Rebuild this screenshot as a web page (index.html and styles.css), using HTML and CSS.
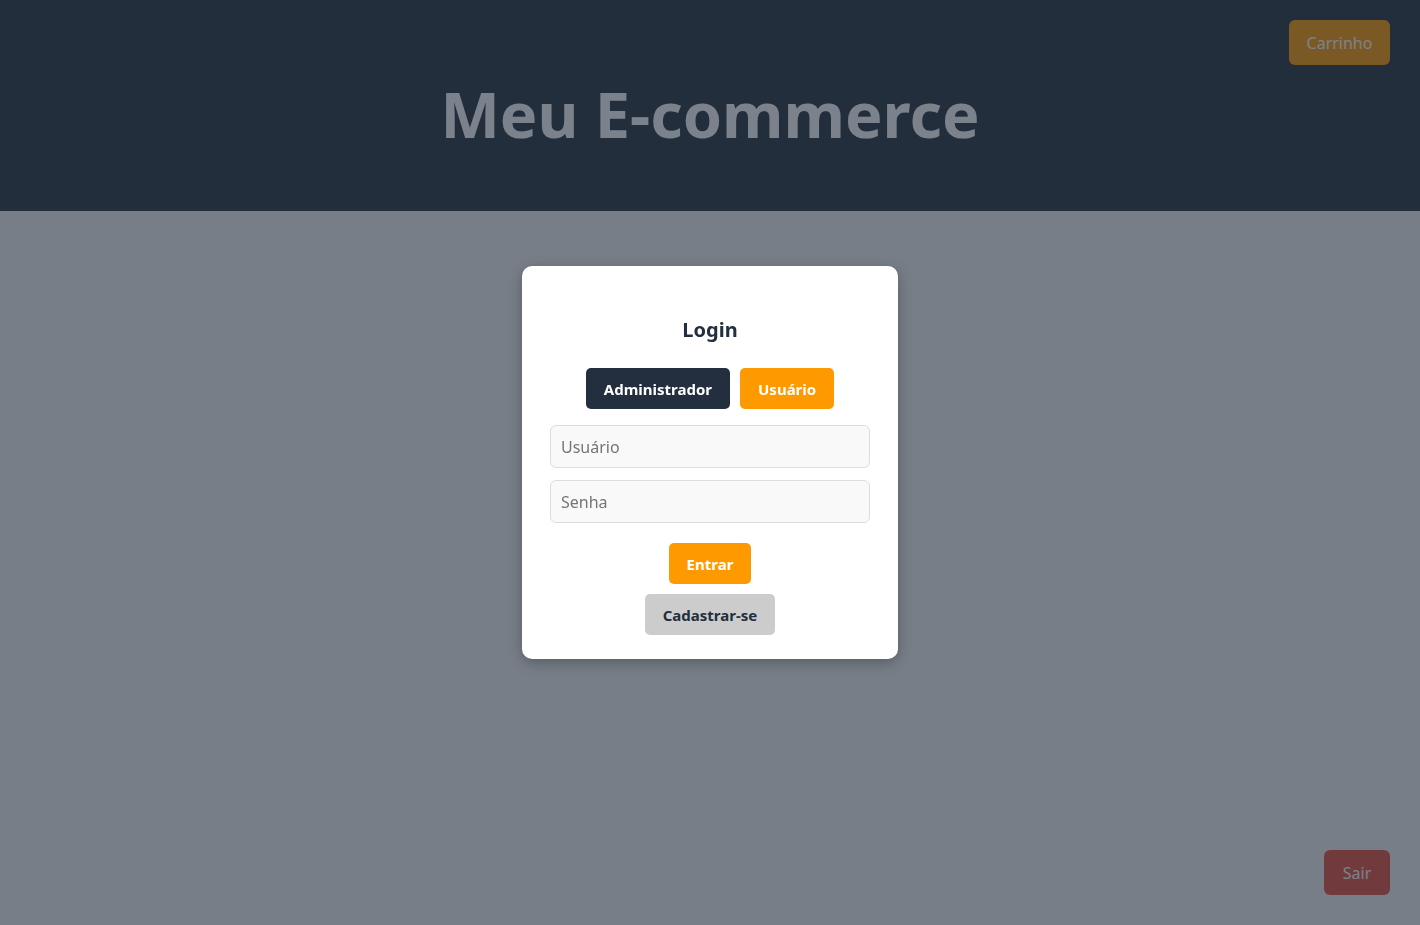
FILE: index.html
```html
<!DOCTYPE html>
<html lang="pt-BR">
<head>
<meta charset="utf-8">
<title>Meu E-commerce</title>
<link rel="stylesheet" href="styles.css">
</head>
<body>
<header class="site-header">
  <h1 class="site-title">Meu E-commerce</h1>
  <button class="cart-btn">Carrinho</button>
</header>
<main class="content"></main>
<button class="logout-btn">Sair</button>

<div class="overlay">
  <div class="modal">
    <h2 class="modal-title">Login</h2>
    <div class="tabs">
      <button class="tab tab-admin">Administrador</button>
      <button class="tab tab-user">Usuário</button>
    </div>
    <form class="form">
      <input class="field" type="text" placeholder="Usuário">
      <input class="field" type="password" placeholder="Senha">
      <div class="actions">
        <button type="button" class="btn btn-primary">Entrar</button>
        <button type="button" class="btn btn-secondary">Cadastrar-se</button>
      </div>
    </form>
  </div>
</div>
</body>
</html>
```

FILE: styles.css
```css
* { box-sizing: border-box; }
html, body { height: 100%; }
body {
  margin: 0;
  background: #f4f4f4;
  font-family: "Noto Sans", "Open Sans", "DejaVu Sans", sans-serif;
  color: #232f3e;
}
.site-header {
  position: relative;
  height: 211px;
  background: #232f3e;
  display: flex;
  align-items: center;
  justify-content: center;
}
.site-title {
  margin: 0;
  color: #ffffff;
  font-size: 63px;
  font-weight: 700;
  letter-spacing: 0;
  padding-top: 16px;
}
.cart-btn {
  position: absolute;
  top: 20px;
  right: 30px;
  width: 101px;
  height: 45px;
  border: none;
  border-radius: 6px;
  background: #ff9900;
  color: #ffffff;
  font-family: inherit;
  font-size: 16px;
}
.logout-btn {
  position: fixed;
  right: 30px;
  bottom: 30px;
  width: 66px;
  height: 45px;
  border: none;
  border-radius: 6px;
  background: #e74c3c;
  color: #ffffff;
  font-family: inherit;
  font-size: 16px;
}
.overlay {
  position: fixed;
  inset: 0;
  background: rgba(35, 47, 62, 0.6);
  display: flex;
  align-items: center;
  justify-content: center;
}
.modal {
  width: 376px;
  background: #ffffff;
  border-radius: 10px;
  box-shadow: 0 4px 14px rgba(0, 0, 0, 0.25);
  padding: 24px 28px 24px;
  display: flex;
  flex-direction: column;
  align-items: center;
}
.modal-title {
  margin: 27px 0 25px;
  font-size: 20px;
  line-height: 26px;
  font-weight: 700;
  color: #232f3e;
}
.tabs {
  display: flex;
  gap: 10px;
  margin-bottom: 16px;
}
.tab {
  height: 41px;
  padding: 0 18px;
  border: none;
  border-radius: 5px;
  font-family: inherit;
  font-size: 15px;
  font-weight: 700;
  color: #ffffff;
}
.tab-admin { background: #232f3e; }
.tab-user { background: #ff9900; }
.form {
  width: 100%;
  display: flex;
  flex-direction: column;
  gap: 12px;
}
.field {
  width: 100%;
  height: 43px;
  padding: 0 10px;
  border: 1px solid #dddddd;
  border-radius: 6px;
  background: #f9f9f9;
  font-family: inherit;
  font-size: 16px;
  color: #232f3e;
}
.field::placeholder { color: #757575; }
.actions {
  margin-top: 8px;
  display: flex;
  flex-direction: column;
  align-items: center;
  gap: 10px;
}
.btn {
  height: 41px;
  padding: 0 18px;
  border: none;
  border-radius: 5px;
  font-family: inherit;
  font-size: 15px;
  font-weight: 700;
}
.btn-primary { background: #ff9900; color: #ffffff; }
.btn-secondary { background: #cccccc; color: #232f3e; }
```
